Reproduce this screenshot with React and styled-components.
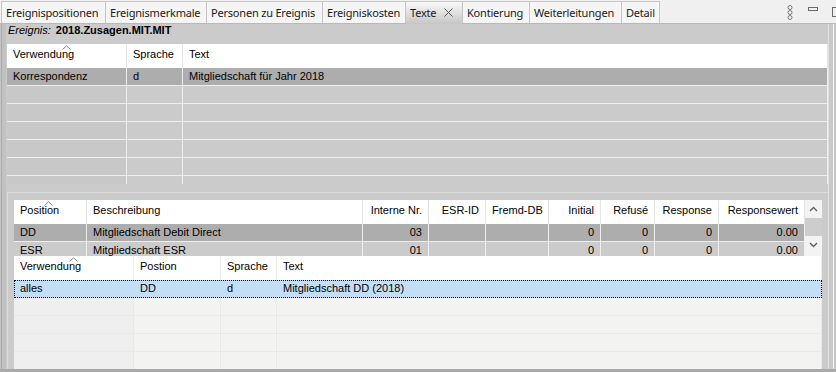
import React from "react";
import styled, { createGlobalStyle } from "styled-components";

const GlobalStyle = createGlobalStyle`
  html, body {
    margin: 0;
    padding: 0;
    background: #cbcbcb;
  }
`;

const Page = styled.div`
  width: 836px;
  height: 372px;
  box-sizing: border-box;
  border-bottom: 3px solid #a9a9a9;
  background: #cbcbcb;
  display: flex;
  flex-direction: column;
  overflow: hidden;
  font-family: "Liberation Sans", Arial, sans-serif;
  font-size: 11px;
  color: #000;
`;

const TabBar = styled.div`
  height: 24px;
  flex: none;
  box-sizing: border-box;
  display: flex;
  align-items: stretch;
  padding: 1px 0 0 1px;
  background: #f0f0f0;
  border-bottom: 1px solid #b8b8b8;
`;

const Tab = styled.div`
  width: ${(p) => p.$w}px;
  flex: none;
  box-sizing: border-box;
  display: flex;
  align-items: center;
  gap: 8px;
  padding: 0 0 1px 4px;
  margin-bottom: ${(p) => (p.$active ? "-1px" : "0")};
  border: 1px solid #c6c6c6;
  border-bottom: none;
  border-left: ${(p) => (p.$first ? "1px solid #c6c6c6" : "none")};
  background: ${(p) =>
    p.$active ? "linear-gradient(#f8f8f8, #c6c6c6)" : "#f5f5f5"};
  font-family: "Noto Sans", "Open Sans", sans-serif;
  font-size: 11px;
  letter-spacing: -0.2px;
  color: #1a1a1a;
  white-space: nowrap;
  overflow: hidden;
`;

const Spacer = styled.div`
  flex: 1;
`;

const WindowControls = styled.div`
  display: flex;
  align-items: flex-start;
  gap: 14px;
  padding-top: 4px;
  margin-right: -6px;
`;

const Body = styled.div`
  flex: 1;
  display: flex;
  min-height: 0;
`;

const LeftRail = styled.div`
  width: 7px;
  flex: none;
  background: linear-gradient(
    to right,
    #c4c4c4 0 1px,
    #acacac 1px 2px,
    #c1c1c1 2px 6px,
    #cbcbcb 6px
  );
`;

const RightRail = styled.div`
  width: 8px;
  flex: none;
  background: linear-gradient(
    to right,
    #e2e2e2 0 1px,
    #c9c9c9 1px 5px,
    #f4f4f4 5px 6px,
    #c4c4c4 6px
  );
`;

const Main = styled.div`
  flex: 1;
  min-width: 0;
  display: flex;
  flex-direction: column;
`;

const InfoLine = styled.div`
  height: 20px;
  flex: none;
  padding-left: 1px;
  line-height: 13px;
  white-space: nowrap;
`;

const InfoLabel = styled.span`
  font-style: italic;
`;

const InfoValue = styled.span`
  font-weight: bold;
  margin-left: 2px;
`;

const TableBox = styled.div`
  height: ${(p) => (p.$h ? `${p.$h}px` : "auto")};
  flex: ${(p) => (p.$grow ? "1" : "none")};
  min-width: 0;
  overflow: hidden;
  background: ${(p) => (p.$light ? "#f3f3f1" : "#cbcbcb")};
`;

const Row = styled.div`
  display: grid;
  grid-template-columns: ${(p) => p.$cols};
  height: ${(p) => (p.$header ? 24 : 18)}px;
  box-sizing: border-box;
  background: ${(p) => p.$bg};
  outline: ${(p) => (p.$focus ? "1px dotted #000" : "none")};
  outline-offset: -1px;
`;

const HeadCell = styled.div`
  position: relative;
  box-sizing: border-box;
  padding: 4px 6px 0;
  line-height: 13px;
  text-align: ${(p) => p.$align || "left"};
  border-right: 1px solid ${(p) => (p.$light ? "#ececec" : "#e4e4e4")};
  background: #fff;
  white-space: nowrap;
  overflow: hidden;
`;

const Cell = styled.div`
  box-sizing: border-box;
  padding: 0 6px;
  line-height: 17px;
  text-align: ${(p) => p.$align || "left"};
  border-right: 1px solid ${(p) => p.$line};
  border-bottom: 1px solid ${(p) => p.$line};
  background: ${(p) => p.$bg || "transparent"};
  white-space: nowrap;
  overflow: hidden;
`;

const SortCaret = styled.svg`
  position: absolute;
  top: 1px;
  left: ${(p) => p.$x}px;
`;

const LowerPanel = styled.div`
  flex: 1;
  min-height: 0;
  margin-top: 8px;
  display: flex;
  flex-direction: column;
  border-top: 1px solid #dcdcdc;
  border-left: 1px solid #dcdcdc;
  padding: 7px 6px 0 6px;
`;

const SplitRow = styled.div`
  display: flex;
  height: 56px;
  flex: none;
  overflow: hidden;
`;

const ScrollBar = styled.div`
  width: 17px;
  flex: none;
  display: flex;
  flex-direction: column;
  align-items: center;
  background: #f3f3f3;
`;

const ScrollArrow = styled.div`
  height: 18px;
  display: flex;
  align-items: center;
  justify-content: center;
`;

const ScrollThumb = styled.div`
  width: 17px;
  height: 18px;
  background: #cdcdcd;
`;

const Caret = ({ x }) => (
  <SortCaret $x={x} width="9" height="5" viewBox="0 0 9 5">
    <path d="M0.5 4.5 L4.5 0.8 L8.5 4.5" fill="none" stroke="#8a8a8a" strokeWidth="1" />
  </SortCaret>
);

const Chevron = ({ up }) => (
  <svg width="9" height="6" viewBox="0 0 9 6">
    <path
      d={up ? "M1 5 L4.5 1.5 L8 5" : "M1 1 L4.5 4.5 L8 1"}
      fill="none"
      stroke="#606060"
      strokeWidth="1.4"
    />
  </svg>
);

function DataTable({ columns, caretX, rows, selectedBg, rowBg, firstColBg, line, light, focusFirst, fill }) {
  const cols = columns.map((c) => (c.w ? `${c.w}px` : "1fr")).join(" ");
  const body = [...rows];
  while (body.length < fill) body.push(columns.map(() => ""));
  return (
    <>
      <Row $header $cols={cols} $bg="#fff">
        {columns.map((c, i) => (
          <HeadCell key={c.name} $align={c.align} $light={light}>
            {i === 0 && <Caret x={caretX} />}
            {c.name}
          </HeadCell>
        ))}
      </Row>
      {body.map((r, ri) => {
        const selected = ri === 0 && rows.length > 0;
        return (
          <Row
            key={ri}
            $cols={cols}
            $bg={selected ? selectedBg : rowBg}
            $focus={selected && focusFirst}
          >
            {r.map((v, ci) => (
              <Cell
                key={ci}
                $align={columns[ci].align}
                $line={selected && focusFirst ? "transparent" : line}
                $bg={!selected && ci === 0 ? firstColBg : undefined}
              >
                {v}
              </Cell>
            ))}
          </Row>
        );
      })}
    </>
  );
}

const tabs = [
  { label: "Ereignispositionen", w: 105 },
  { label: "Ereignismerkmale", w: 101 },
  { label: "Personen zu Ereignis", w: 116 },
  { label: "Ereigniskosten", w: 83 },
  { label: "Texte", w: 57, active: true },
  { label: "Kontierung", w: 67 },
  { label: "Weiterleitungen", w: 92 },
  { label: "Detail", w: 38 },
];

const textColumns = [
  { name: "Verwendung", w: 120 },
  { name: "Sprache", w: 56 },
  { name: "Text" },
];

const positionColumns = [
  { name: "Position", w: 73 },
  { name: "Beschreibung", w: 276 },
  { name: "Interne Nr.", w: 66, align: "right" },
  { name: "ESR-ID", w: 57, align: "right" },
  { name: "Fremd-DB", w: 63, align: "right" },
  { name: "Initial", w: 52, align: "right" },
  { name: "Refusé", w: 54, align: "right" },
  { name: "Response", w: 64, align: "right" },
  { name: "Responsewert", w: 86, align: "right" },
];

const positionTextColumns = [
  { name: "Verwendung", w: 120 },
  { name: "Postion", w: 87 },
  { name: "Sprache", w: 56 },
  { name: "Text" },
];

export default function App() {
  return (
    <Page>
      <GlobalStyle />
      <TabBar>
        {tabs.map((t, i) => (
          <Tab key={t.label} $w={t.w} $active={t.active} $first={i === 0}>
            {t.label}
            {t.active && (
              <svg width="9" height="9" viewBox="0 0 9 9">
                <path d="M0.5 0.5 L8.5 8.5 M8.5 0.5 L0.5 8.5" stroke="#555" strokeWidth="1" />
              </svg>
            )}
          </Tab>
        ))}
        <Spacer />
        <WindowControls>
          <svg width="8" height="15" viewBox="0 0 8 15">
            <circle cx="4" cy="2.5" r="2" fill="none" stroke="#7a7a7a" />
            <circle cx="4" cy="7.5" r="2" fill="none" stroke="#7a7a7a" />
            <circle cx="4" cy="12.5" r="2" fill="none" stroke="#7a7a7a" />
          </svg>
          <svg width="10" height="8" viewBox="0 0 10 8">
            <rect x="0.5" y="2.5" width="9" height="3" fill="none" stroke="#6a6a6a" />
          </svg>
          <svg width="10" height="12" viewBox="0 0 10 12">
            <rect x="0.5" y="2.5" width="9" height="9" fill="none" stroke="#6a6a6a" />
          </svg>
        </WindowControls>
      </TabBar>
      <Body>
        <LeftRail />
        <Main>
          <InfoLine>
            <InfoLabel>Ereignis:</InfoLabel> <InfoValue>2018.Zusagen.MIT.MIT</InfoValue>
          </InfoLine>
          <TableBox $h={140}>
            <DataTable
              columns={textColumns}
              caretX={55}
              rows={[["Korrespondenz", "d", "Mitgliedschaft für Jahr 2018"]]}
              selectedBg="#adadad"
              rowBg="#cbcbcb"
              firstColBg="#c8c8c8"
              line="#efefef"
              fill={7}
            />
          </TableBox>
          <LowerPanel>
            <SplitRow>
              <TableBox $grow>
                <DataTable
                  columns={positionColumns}
                  caretX={30}
                  rows={[
                    ["DD", "Mitgliedschaft Debit Direct", "03", "", "", "0", "0", "0", "0.00"],
                    ["ESR", "Mitgliedschaft ESR", "01", "", "", "0", "0", "0", "0.00"],
                  ]}
                  selectedBg="#adadad"
                  rowBg="#cbcbcb"
                  line="#efefef"
                  fill={2}
                />
              </TableBox>
              <ScrollBar>
                <ScrollArrow>
                  <Chevron up />
                </ScrollArrow>
                <ScrollThumb />
                <ScrollArrow>
                  <Chevron />
                </ScrollArrow>
              </ScrollBar>
            </SplitRow>
            <TableBox $grow $light>
              <DataTable
                columns={positionTextColumns}
                caretX={55}
                rows={[["alles", "DD", "d", "Mitgliedschaft DD (2018)"]]}
                selectedBg="#c4def5"
                rowBg="#f3f3f1"
                firstColBg="#efefef"
                line="#e9e9e7"
                light
                focusFirst
                fill={5}
              />
            </TableBox>
          </LowerPanel>
        </Main>
        <RightRail />
      </Body>
    </Page>
  );
}
